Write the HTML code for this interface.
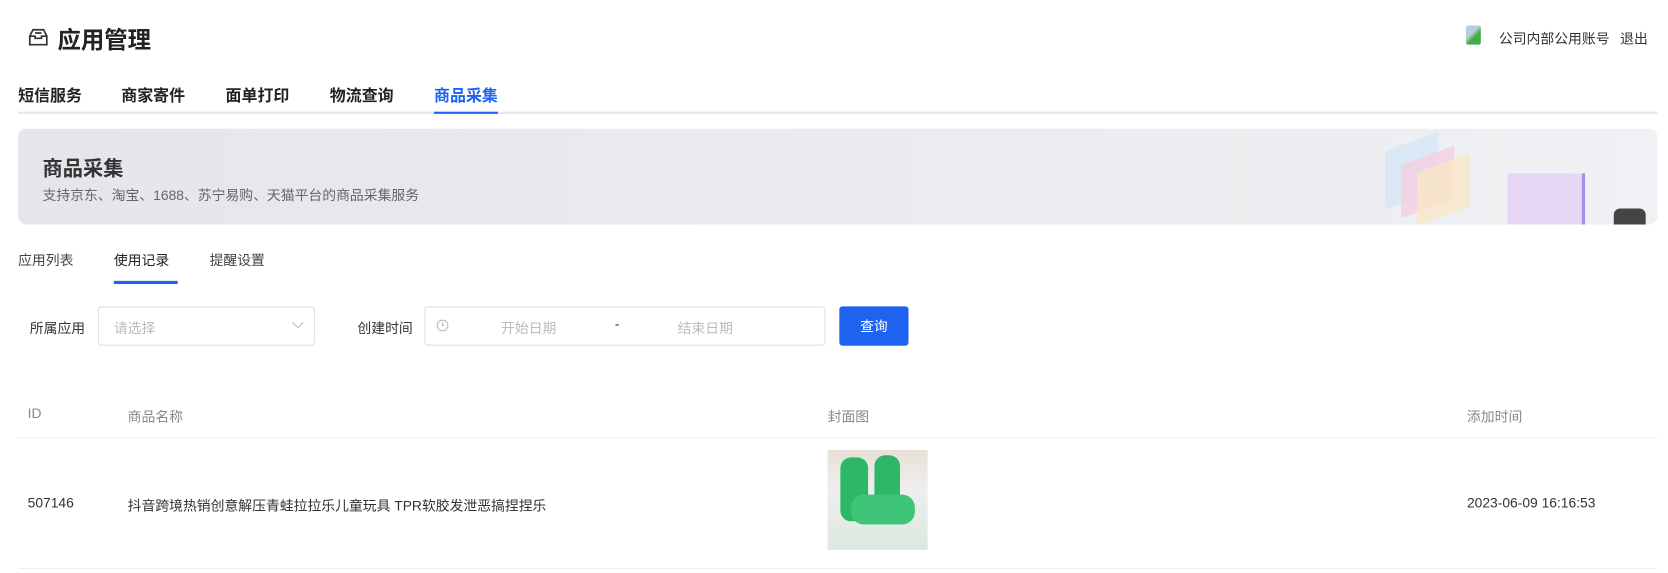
<!DOCTYPE html><html><head><meta charset="utf-8"><style>
body{margin:0;width:1668px;height:573px;background:#fff;font-family:"Liberation Sans","Noto Sans CJK SC",sans-serif;color:#333;position:relative;overflow:hidden}
#w{position:absolute;left:0;top:0;width:1568px;height:539px;transform:scale(1.0638);transform-origin:0 0}
.a{position:absolute;white-space:nowrap}
.t{font-size:15px;font-weight:bold;color:#222;top:79px}
</style></head><body><div id="w">
<svg class="a" style="left:26px;top:26px" width="20" height="18" viewBox="0 0 20 18"><path d="M2 8 L5 2 H15 L18 8 V16 H2 Z M2 8 H7 V10 H13 V8 H18 M7 5 H13" fill="none" stroke="#333" stroke-width="1.6"/></svg>
<div class="a" style="left:54px;top:20px;font-size:22px;font-weight:bold;color:#222">应用管理</div>
<div class="a" style="left:1378px;top:24px;width:14px;height:18px;background:linear-gradient(135deg,#bcd 40%,#4a4 60%);border-radius:2px"></div>
<div class="a" style="left:1409px;top:26px;font-size:13px;color:#333">公司内部公用账号</div>
<div class="a" style="left:1523px;top:26px;font-size:13px;color:#333">退出</div>
<div class="a t" style="left:17px">短信服务</div>
<div class="a t" style="left:114px">商家寄件</div>
<div class="a t" style="left:212px">面单打印</div>
<div class="a t" style="left:310px">物流查询</div>
<div class="a t" style="left:408px;color:#1e62f0">商品采集</div>
<div class="a" style="left:17px;top:105px;width:1541px;height:2px;background:#e3e6eb"></div>
<div class="a" style="left:408px;top:105px;width:60px;height:2px;background:#1e62f0"></div>
<div class="a" style="left:17px;top:121px;width:1541px;height:90px;border-radius:8px;background:linear-gradient(90deg,#e4e6eb,#eceef1 80%,#f0f1f4);overflow:hidden">
<div class="a" style="left:1285px;top:12px;width:50px;height:55px;background:#d6e6f6;transform:skewY(-20deg);opacity:.8"></div>
<div class="a" style="left:1300px;top:25px;width:50px;height:50px;background:#f4cfe0;transform:skewY(-20deg);opacity:.8"></div>
<div class="a" style="left:1315px;top:32px;width:50px;height:50px;background:#f8e6c8;transform:skewY(-20deg);opacity:.8"></div>
<div class="a" style="left:1400px;top:42px;width:70px;height:48px;background:#e6d6f4;border-right:3px solid #a88ee8"></div>
<div class="a" style="left:1500px;top:75px;width:30px;height:16px;background:#444;border-radius:6px 6px 0 0"></div>
</div>
<div class="a" style="left:40px;top:144px;font-size:19px;font-weight:bold;color:#333">商品采集</div>
<div class="a" style="left:40px;top:173px;font-size:13px;color:#666">支持京东、淘宝、1688、苏宁易购、天猫平台的商品采集服务</div>
<div class="a" style="left:17px;top:234px;font-size:13px;color:#444">应用列表</div>
<div class="a" style="left:107px;top:234px;font-size:13px;color:#222">使用记录</div>
<div class="a" style="left:197px;top:234px;font-size:13px;color:#444">提醒设置</div>
<div class="a" style="left:107px;top:264px;width:60px;height:3px;background:#1e62f0"></div>
<div class="a" style="left:28px;top:298px;font-size:13px;color:#333">所属应用</div>
<div class="a" style="left:92px;top:288px;width:202px;height:35px;border:1px solid #dcdfe6;border-radius:3px"></div>
<div class="a" style="left:107px;top:298px;font-size:13px;color:#bbb">请选择</div>
<svg class="a" style="left:274px;top:302px" width="12" height="8"><path d="M1 1 L6 6 L11 1" fill="none" stroke="#bbb"/></svg>
<div class="a" style="left:336px;top:298px;font-size:13px;color:#333">创建时间</div>
<div class="a" style="left:399px;top:288px;width:375px;height:35px;border:1px solid #dcdfe6;border-radius:3px"></div>
<svg class="a" style="left:410px;top:300px" width="12" height="12"><circle cx="6" cy="6" r="5" fill="none" stroke="#bbb"/><path d="M6 3V6H8" fill="none" stroke="#bbb"/></svg>
<div class="a" style="left:471px;top:298px;font-size:13px;color:#bbb">开始日期</div>
<div class="a" style="left:578px;top:297px;font-size:13px;color:#333">-</div>
<div class="a" style="left:637px;top:298px;font-size:13px;color:#bbb">结束日期</div>
<div class="a" style="left:789px;top:288px;width:65px;height:37px;background:#1e62f0;border-radius:3px;color:#fff;font-size:13px;line-height:37px;text-align:center">查询</div>
<div class="a" style="left:26px;top:381px;font-size:13px;color:#888">ID</div>
<div class="a" style="left:120px;top:381px;font-size:13px;color:#888">商品名称</div>
<div class="a" style="left:778px;top:381px;font-size:13px;color:#888">封面图</div>
<div class="a" style="left:1379px;top:381px;font-size:13px;color:#888">添加时间</div>
<div class="a" style="left:17px;top:411px;width:1541px;height:1px;background:#ebeef2"></div>
<div class="a" style="left:26px;top:465px;font-size:13px;color:#333">507146</div>
<div class="a" style="left:120px;top:465px;font-size:13px;color:#333">抖音跨境热销创意解压青蛙拉拉乐儿童玩具 TPR软胶发泄恶搞捏捏乐</div>
<div class="a" style="left:778px;top:423px;width:94px;height:94px;background:linear-gradient(180deg,#e8e0d6,#eee 40%,#dde8e0)"></div>
<div class="a" style="left:790px;top:430px;width:26px;height:60px;background:#2cb866;border-radius:10px"></div>
<div class="a" style="left:822px;top:428px;width:24px;height:50px;background:#2cb866;border-radius:10px"></div>
<div class="a" style="left:800px;top:465px;width:60px;height:28px;background:#3ec577;border-radius:12px"></div>
<div class="a" style="left:1379px;top:465px;font-size:13px;color:#333">2023-06-09 16:16:53</div>
<div class="a" style="left:17px;top:534px;width:1541px;height:1px;background:#ebeef2"></div>
</div></body></html>
